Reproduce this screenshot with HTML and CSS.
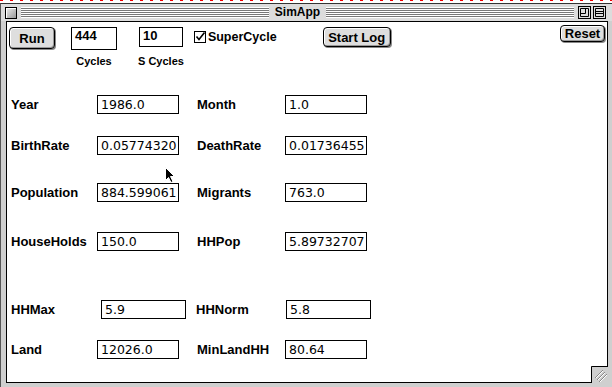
FILE: index.html
```html
<!DOCTYPE html>
<html>
  <head>
    <meta charset="UTF-8" />
    <title>SimApp</title>
    <link rel="stylesheet" href="styles.css">
  </head>
  <body>
    <div class="desk-strip"></div>

    <div class="window">
      <div class="titlebar">
        <span class="closebox"></span>
        <span class="stripes"></span>
        <span class="title">SimApp</span>
        <span class="stripes"></span>
        <svg class="winbox" width="13" height="13" viewBox="0 0 13 13">
          <rect x="0.5" y="0.5" width="12" height="12" fill="#ddd" stroke="#000" />
          <path d="M2.5 2.5 H10.5 V10.5 H2.5 Z M2.5 7.5 H7.5 V2.5" fill="none" stroke="#000" />
        </svg>
        <svg class="winbox" width="13" height="13" viewBox="0 0 13 13">
          <rect x="0.5" y="0.5" width="12" height="12" fill="#ddd" stroke="#000" />
          <path d="M2.5 2.5 H10.5 V10.5 H2.5 Z M2.5 5.5 H10.5 M2.5 7.5 H10.5" fill="none" stroke="#000" />
        </svg>
      </div>

      <div class="content">
        <div class="toolbar">
          <button class="mac-btn run">Run</button>

          <div class="counter cycles">
            <div class="count-box">444</div>
            <span class="count-label">Cycles</span>
          </div>

          <div class="counter scycles">
            <div class="count-box small">10</div>
            <span class="count-label">S Cycles</span>
          </div>

          <label class="check">
            <svg width="12" height="12" viewBox="0 0 12 12">
              <rect x="0.5" y="0.5" width="11" height="11" fill="#fff" stroke="#000" />
              <path d="M2.5 5.5 L5 8.5 L10.5 1.5" fill="none" stroke="#000" stroke-width="1.6" />
            </svg>
            SuperCycle
          </label>

          <button class="mac-btn startlog">Start Log</button>
          <button class="mac-btn reset">Reset</button>
        </div>

        <div class="fields">
          <div class="row r1">
            <span class="lbl">Year</span><span class="val">1986.0</span>
            <span class="lbl lbl2">Month</span><span class="val">1.0</span>
          </div>
          <div class="row r2">
            <span class="lbl">BirthRate</span><span class="val">0.05774320</span>
            <span class="lbl lbl2">DeathRate</span><span class="val">0.01736455</span>
          </div>
          <div class="row r3">
            <span class="lbl">Population</span><span class="val">884.599061</span>
            <span class="lbl lbl2">Migrants</span><span class="val">763.0</span>
          </div>
          <div class="row r4">
            <span class="lbl">HouseHolds</span><span class="val">150.0</span>
            <span class="lbl lbl2">HHPop</span><span class="val">5.89732707</span>
          </div>
          <div class="row r5 wide">
            <span class="lbl">HHMax</span><span class="val">5.9</span>
            <span class="lbl lbl2">HHNorm</span><span class="val">5.8</span>
          </div>
          <div class="row r6">
            <span class="lbl">Land</span><span class="val">12026.0</span>
            <span class="lbl lbl2">MinLandHH</span><span class="val">80.64</span>
          </div>
        </div>

        <svg class="cursor" width="11" height="17" viewBox="0 0 11 17">
          <path d="M0.5 0.5 V13.5 L3.5 10.5 L6 15.5 L8 14.5 L5.5 9.5 H9.5 Z" fill="#000" stroke="#fff" stroke-width="1" />
        </svg>

        <svg class="growbox" width="17" height="17" viewBox="0 0 17 17">
          <rect x="0" y="0" width="17" height="17" fill="#cfcfcf" />
          <path d="M0.5 17 V0.5 H17" fill="none" stroke="#000" />
          <path d="M4 12 L12 4 M6 14 L14 6 M8 16 L16 8" stroke="#888" />
          <path d="M5 12 L12 5 M7 14 L14 7 M9 16 L16 9" stroke="#fff" />
        </svg>
      </div>
    </div>
  </body>
</html>
```

FILE: styles.css
```css
* {
  box-sizing: border-box;
}

body {
  margin: 0;
  width: 612px;
  height: 387px;
  overflow: hidden;
  background: #fff;
  font-family: "Liberation Sans", Arial, sans-serif;
}

.desk-strip {
  height: 3px;
  background:
    repeating-linear-gradient(90deg, #e00 0 3px, transparent 3px 10px) top left / 100% 1px no-repeat,
    #fff;
}

.window {
  height: 384px;
  display: flex;
  flex-direction: column;
  background: #cfcfcf;
  border-top: 1px solid #333;
  border-left: 1px solid #555;
  padding: 0 4px 4px 5px;
}

/* title bar */
.titlebar {
  height: 17px;
  margin: 0 -4px 0 -5px;
  padding: 0 6px 0 4px;
  display: flex;
  align-items: center;
  background: #dcdcdc;
}

.closebox {
  width: 12px;
  height: 12px;
  border: 1px solid #000;
  background: linear-gradient(135deg, #eee, #999);
  box-shadow: inset 1px 1px #fff;
  margin-right: 4px;
}

.stripes {
  flex: 1;
  height: 11px;
  background: repeating-linear-gradient(to bottom, #fff 0 1px, #777 1px 2px);
}

.title {
  padding: 0 6px;
  font-size: 12px;
  font-weight: bold;
  color: #000;
  line-height: 17px;
}

.winbox {
  margin-left: 2px;
  flex-shrink: 0;
}

.winbox:first-of-type {
  margin-left: 4px;
}

/* content area */
.content {
  flex: 1;
  position: relative;
  background: #fff;
  border: 1px solid #000;
}

.toolbar {
  display: flex;
  align-items: flex-start;
  padding: 3px 2px 0 2px;
  height: 74px;
}

.mac-btn {
  font-family: "Liberation Sans", Arial, sans-serif;
  font-weight: bold;
  font-size: 13px;
  color: #000;
  background: #dedede;
  border: 1px solid #000;
  border-radius: 4px;
  box-shadow: inset 1px 1px #fff, inset -1px -1px #999, 1px 1px 0 #888;
  padding: 0;
}

.run {
  width: 46px;
  height: 22px;
  margin-top: 2px;
}

.startlog {
  width: 68px;
  height: 20px;
  margin: 2px 0 0 46px;
}

.reset {
  width: 45px;
  height: 17px;
  margin-left: auto;
}

.counter {
  display: flex;
  flex-direction: column;
  align-items: center;
  margin-top: 2px;
}

.cycles {
  margin-left: 16px;
}

.scycles {
  margin-left: 21px;
}

.count-box {
  width: 46px;
  height: 23px;
  border: 1px solid #000;
  font-weight: bold;
  font-size: 13px;
  line-height: 14px;
  padding: 1px 3px;
}

.count-box.small {
  width: 44px;
  height: 20px;
}

.count-label {
  font-weight: bold;
  font-size: 11px;
  margin-top: 5px;
}

.scycles .count-label {
  margin-top: 8px;
}

.check {
  display: flex;
  align-items: center;
  gap: 2px;
  margin: 5px 0 0 10px;
  font-weight: bold;
  font-size: 12.5px;
}

/* data fields */
.fields {
  display: flex;
  flex-direction: column;
  padding: 0 0 0 4px;
}

.row {
  display: flex;
  align-items: center;
  height: 19px;
}

.lbl {
  width: 86px;
  font-weight: bold;
  font-size: 13px;
}

.lbl2 {
  width: 88px;
  margin-left: 18px;
}

.val {
  width: 82px;
  height: 19px;
  border: 1px solid #000;
  padding: 0 0 0 3px;
  font-family: "DejaVu Sans", sans-serif;
  font-size: 12.5px;
  line-height: 17px;
  white-space: nowrap;
  overflow: hidden;
}

.r1 { margin-top: -1px; }
.r2 { margin-top: 22px; }
.r3 { margin-top: 28px; }
.r4 { margin-top: 30px; }
.r5 { margin-top: 49px; }
.r6 { margin-top: 21px; }

.wide .lbl {
  width: 90px;
}

.wide .val {
  width: 85px;
}

.wide .lbl2 {
  width: 90px;
  margin-left: 10px;
}

.cursor {
  position: absolute;
  left: 158px;
  top: 145px;
}

.growbox {
  position: absolute;
  right: -1px;
  bottom: -1px;
}
```
